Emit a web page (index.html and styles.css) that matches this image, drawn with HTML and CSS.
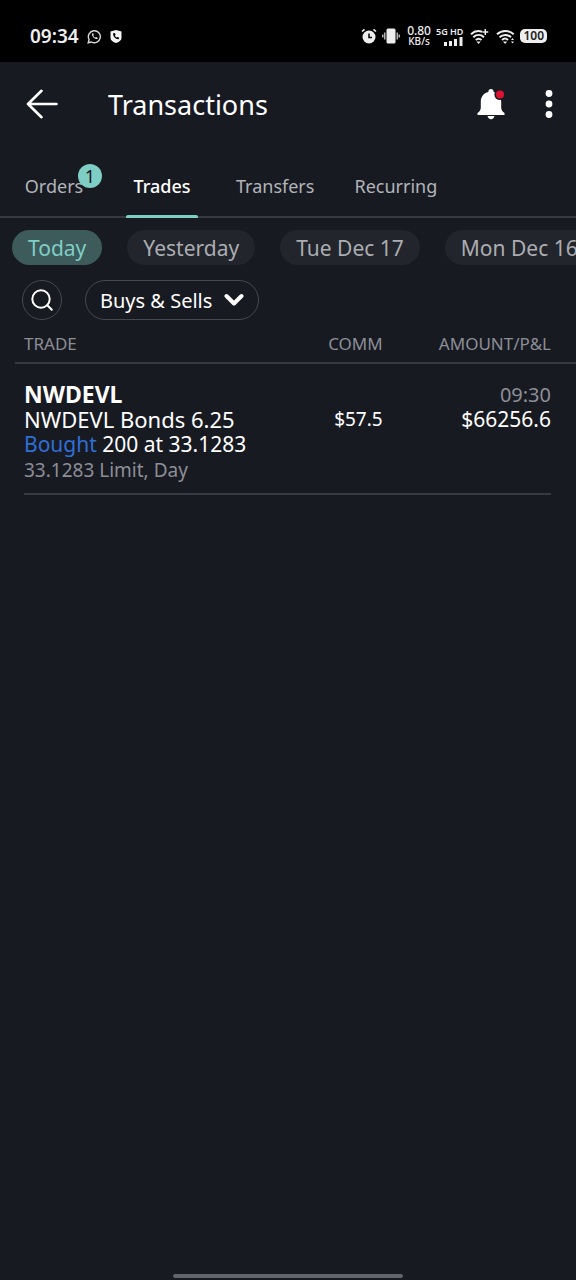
FILE: index.html
```html
<!DOCTYPE html>
<html lang="en">
<head>
<meta charset="utf-8">
<meta name="viewport" content="width=device-width, initial-scale=1">
<title>Transactions</title>
<link rel="stylesheet" href="styles.css">
</head>
<body>
<div class="status-bar">
  <div class="status-group">
    <span class="status-time">09:34</span>
    <svg class="icon-chat" width="15" height="15" viewBox="0 0 15 15" fill="none" stroke="#d8d8d8" stroke-width="1.4" aria-hidden="true">
      <path d="M1.2 13.8l.9-3.2A6 6 0 1 1 4.5 13z"/>
      <path d="M5 4.5c-.6 2.600 2.700 6 5.500 5.500l.2-1.300-1.600-.8-.9.7c-.9-.4-1.500-1-1.900-1.900l.6-.8-.7-1.600z" fill="#d8d8d8" stroke="none"/>
    </svg>
    <svg class="icon-shield" width="12" height="13" viewBox="0 0 12 13" aria-hidden="true">
      <path d="M6 0l5.500 1.500V8c0 2.500-2.500 4-5.500 5C3 12 .5 10.500.5 8V1.500z" fill="#f4f4f4"/>
      <path d="M3.200 3.200C2.600 6 5.400 9.500 8.800 9.200l.4-1.400-1.700-.9-.9.700C5.800 7.200 5.200 6.500 4.900 5.700l.7-.9-.8-1.700z" fill="#000"/>
    </svg>
  </div>
  <div class="status-group status-right">
    <svg width="16" height="16" viewBox="0 0 16 16" aria-hidden="true">
      <circle cx="8" cy="9" r="6.500" fill="#eee"/>
      <path d="M1 3.500L3.500 1.300M15 3.500L12.500 1.300" stroke="#eee" stroke-width="1.600"/>
      <path d="M8 5.500V9.500h3" fill="none" stroke="#000" stroke-width="1.500"/>
    </svg>
    <svg width="18" height="16" viewBox="0 0 18 16" aria-hidden="true">
      <rect x="4.500" y="0.500" width="9" height="15" rx="1.500" fill="#eee"/>
      <path d="M2.800 4.500v7M.8 6.500v3M15.200 4.500v7M17.200 6.500v3" stroke="#ddd" stroke-width="1.200"/>
    </svg>
    <span class="status-speed"><span>0.80</span><span class="status-unit">KB/s</span></span>
    <span class="status-cell">
      <span class="status-net">5G HD</span>
      <svg width="19" height="9" viewBox="0 0 19 9" fill="#eee" aria-hidden="true">
        <path d="M0 5h3v4H0zM5 4h3v5H5zM10 2h3v7h-3zM15.500 0h3v9h-3z"/>
      </svg>
    </span>
    <svg class="icon-wifi" width="19" height="17" viewBox="0 0 19 17" fill="none" stroke="#eee" stroke-width="2" aria-hidden="true">
      <path d="M1 6.200C4.500 3 8.500 2.500 12 3.800M3.300 9.200c3.200-2.900 7.500-2.900 10.700 0M5.800 12c1.700-1.500 4-1.500 5.700 0"/>
      <path d="M6.500 13.500h4.200L8.600 16z" fill="#eee" stroke="none"/>
      <path d="M15.300 1v6M12.300 4h6" stroke-width="1.500"/>
    </svg>
    <svg class="icon-wifi" width="19" height="17" viewBox="0 0 19 17" fill="none" stroke="#eee" stroke-width="2" aria-hidden="true">
      <path d="M1 6.200c4.700-4.400 12-4.400 16.700 0M3.500 9.200c3.300-3 8.300-3 11.500 0M6 12c1.800-1.700 4.300-1.700 6 0"/>
      <path d="M7 13.500h4.200L9.100 16z" fill="#eee" stroke="none"/>
      <path d="M15 12l1.500-2 1.500 2zM15 13.500h3l-1.500 2z" fill="#eee" stroke="none"/>
    </svg>
    <span class="battery">100</span>
  </div>
</div>

<header class="app-bar">
  <button class="icon-button" type="button" aria-label="Back">
    <svg width="32" height="30" viewBox="0 0 32 30" fill="none" stroke="#fff" stroke-width="2.600" stroke-linecap="round" stroke-linejoin="round"><path d="M30.500 15H2M15.500 1.800L2 15l13.500 13.200"/></svg>
  </button>
  <h1 class="title">Transactions</h1>
  <button class="icon-button" type="button" aria-label="Notifications">
    <svg width="28" height="32" viewBox="0 0 28 32">
      <path d="M14 1c1.500 0 2.600 1 2.600 2.400v.7c4.900 1.200 7.600 5 7.600 9.700v5.700c0 2.500 1.400 4.300 3.300 5.500v2H.5v-2c1.900-1.200 3.300-3 3.300-5.500v-5.700c0-4.700 2.700-8.500 7.600-9.700v-.7C11.400 2 12.500 1 14 1z" fill="#fff"/>
      <path d="M10.500 28h7c-.4 2-1.700 3.200-3.500 3.200S10.900 30 10.500 28z" fill="#fff"/>
      <circle cx="23" cy="6.500" r="5.600" fill="#181a22"/>
      <circle cx="23" cy="6.500" r="4" fill="#dc1432"/>
    </svg>
  </button>
  <button class="icon-button" type="button" aria-label="More options">
    <svg width="8" height="28" viewBox="0 0 8 28" fill="#fff"><circle cx="4" cy="3.500" r="3.400"/><circle cx="4" cy="14" r="3.400"/><circle cx="4" cy="24.500" r="3.400"/></svg>
  </button>
</header>

<nav class="tabs">
  <a class="tab" href="#orders">Orders<span class="tab-badge">1</span></a>
  <a class="tab tab-active" href="#trades" aria-current="page">Trades</a>
  <a class="tab" href="#transfers">Transfers</a>
  <a class="tab" href="#recurring">Recurring</a>
</nav>

<main>
  <div class="days">
    <button class="chip chip-active" type="button">Today</button>
    <button class="chip" type="button">Yesterday</button>
    <button class="chip" type="button">Tue Dec 17</button>
    <button class="chip" type="button">Mon Dec 16</button>
  </div>

  <div class="filters">
    <button class="search" type="button" aria-label="Search">
      <svg width="24" height="24" viewBox="0 0 24 24" fill="none" stroke="#fff" stroke-width="2" stroke-linecap="round"><circle cx="11" cy="11" r="8.700"/><path d="M17.300 17.300l4.500 4.500"/></svg>
    </button>
    <button class="side-filter" type="button" aria-haspopup="listbox">
      Buys &amp; Sells
      <svg width="20" height="14" viewBox="0 0 20 14" fill="none" stroke="#fff" stroke-width="4" stroke-linecap="round" stroke-linejoin="round"><path d="M2.500 3L10 10.500 17.500 3"/></svg>
    </button>
  </div>

  <table class="trades">
    <thead>
      <tr><th scope="col">TRADE</th><th class="num" scope="col">COMM</th><th class="num" scope="col">AMOUNT/P&amp;L</th></tr>
    </thead>
    <tbody>
      <tr>
        <td>
          <div class="symbol">NWDEVL</div>
          <div class="name">NWDEVL Bonds 6.25</div>
          <div class="fill"><span class="bought">Bought</span> 200 at 33.1283</div>
          <div class="order">33.1283 Limit, Day</div>
        </td>
        <td class="num comm">$57.5</td>
        <td class="num"><div class="time">09:30</div><div class="amount">$66256.6</div></td>
      </tr>
    </tbody>
  </table>
  <hr class="row-line">
</main>

<div class="home-handle"></div>
</body>
</html>
```
FILE: styles.css
```css
* {
  box-sizing: border-box;
}

body {
  margin: 0;
  min-height: 100vh;
  display: flex;
  flex-direction: column;
  overflow-x: hidden;
  background: #181a22;
  color: #fff;
  font-family: "Noto Sans", "Open Sans", sans-serif;
}

button {
  font: inherit;
  color: inherit;
  background: none;
  border: 0;
  padding: 0;
  cursor: pointer;
}

svg {
  display: block;
  flex: none;
}

.status-bar {
  display: flex;
  justify-content: space-between;
  align-items: center;
  height: 62px;
  padding: 10px 29px 0 30px;
  background: #000;
  color: #eee;
}

.status-group {
  display: flex;
  align-items: center;
  gap: 8px;
}

.status-right {
  gap: 5px;
}

.status-time {
  font-size: 19px;
  font-weight: 600;
  line-height: 24px;
}

.status-speed {
  display: flex;
  flex-direction: column;
  align-items: center;
  margin-left: 2px;
  font-size: 12px;
  font-weight: 500;
  line-height: 11px;
}

.status-unit {
  font-size: 10px;
}

.status-cell {
  display: flex;
  flex-direction: column;
  align-items: flex-end;
}

.status-net {
  font-size: 9px;
  font-weight: 600;
  line-height: 11px;
}

.icon-wifi {
  margin-left: 2px;
}

.battery {
  padding: 0 3px;
  border-radius: 5px;
  background: #eee;
  color: #222;
  font-size: 12px;
  font-weight: 600;
  line-height: 14px;
}

.app-bar {
  display: flex;
  align-items: center;
  height: 86px;
  padding: 0 23px 2px 26px;
}

.icon-button {
  flex: none;
}

.title {
  flex: 1;
  margin: 0 0 0 50px;
  padding-top: 2px;
  font-size: 27px;
  font-weight: 400;
  line-height: 36px;
}

.icon-button + .icon-button {
  margin-left: 40px;
}

.tabs {
  display: flex;
  gap: 36px;
  height: 70px;
  padding: 0 18px;
  border-bottom: 2px solid #363941;
}

.tab {
  position: relative;
  min-width: 72px;
  padding: 26px 2px 0;
  color: #b2b4b9;
  font-size: 18px;
  line-height: 24px;
  text-align: center;
  text-decoration: none;
}

.tab-active {
  color: #fff;
  font-weight: 500;
}

.tab-active::after {
  content: "";
  position: absolute;
  left: 0;
  right: 0;
  bottom: -2px;
  height: 3px;
  border-radius: 2px 2px 0 0;
  background: #7fcec5;
}

.tab-badge {
  position: absolute;
  top: 16px;
  right: -12px;
  width: 24px;
  height: 24px;
  border-radius: 50%;
  background: #7fcec5;
  color: #15181e;
  text-align: center;
}

.days {
  display: flex;
  gap: 25px;
  overflow: hidden;
  padding: 12px 0 0 12px;
}

.chip {
  flex: none;
  height: 35px;
  padding: 1px 16px 0;
  border-radius: 18px;
  background: #22252b;
  color: #abadb2;
  font-size: 21px;
  line-height: 34px;
}

.chip-active {
  background: #3d5b5b;
  color: #7fcec5;
}

.filters {
  display: flex;
  gap: 23px;
  padding: 15px 22px 0;
}

.search,
.side-filter {
  display: flex;
  align-items: center;
  justify-content: center;
  height: 40px;
  border: 1px solid #45484f;
  border-radius: 20px;
}

.search {
  width: 40px;
}

.side-filter {
  gap: 12px;
  padding: 0 14px;
  font-size: 20px;
}

.trades {
  width: calc(100% - 15px);
  margin: 8px 0 0 15px;
  border-collapse: collapse;
}

.trades th {
  padding: 4px 0 6px;
  border-bottom: 2px solid #363941;
  color: #8c8e96;
  font-size: 17px;
  font-weight: 400;
  line-height: 24px;
  text-align: left;
}

.trades td {
  padding: 18px 0 9px;
  vertical-align: top;
  line-height: 25px;
}

.trades th:first-child,
.trades td:first-child {
  padding-left: 9px;
}

.trades th:last-child,
.trades td:last-child {
  width: 30%;
  padding-right: 25px;
}

.trades th:nth-child(2),
.trades td:nth-child(2) {
  padding-right: 25px;
}

.trades .num {
  text-align: right;
}

.symbol {
  font-size: 23px;
  font-weight: 700;
}

.name {
  font-size: 22px;
}

.fill,
.amount {
  font-size: 21px;
}

.bought {
  color: #2f6fd6;
}

.order {
  color: #8c8e96;
  font-size: 19px;
  line-height: 27px;
}

.trades .comm {
  padding-top: 43px;
  font-size: 19px;
}

.time {
  color: #8c8e96;
  font-size: 20px;
}

.row-line {
  margin: 0 25px 0 24px;
  border: 0;
  border-top: 2px solid #363941;
}

.home-handle {
  width: 40%;
  height: 4px;
  margin: auto auto 2px;
  border-radius: 2px;
  background: #62646c;
}
```
